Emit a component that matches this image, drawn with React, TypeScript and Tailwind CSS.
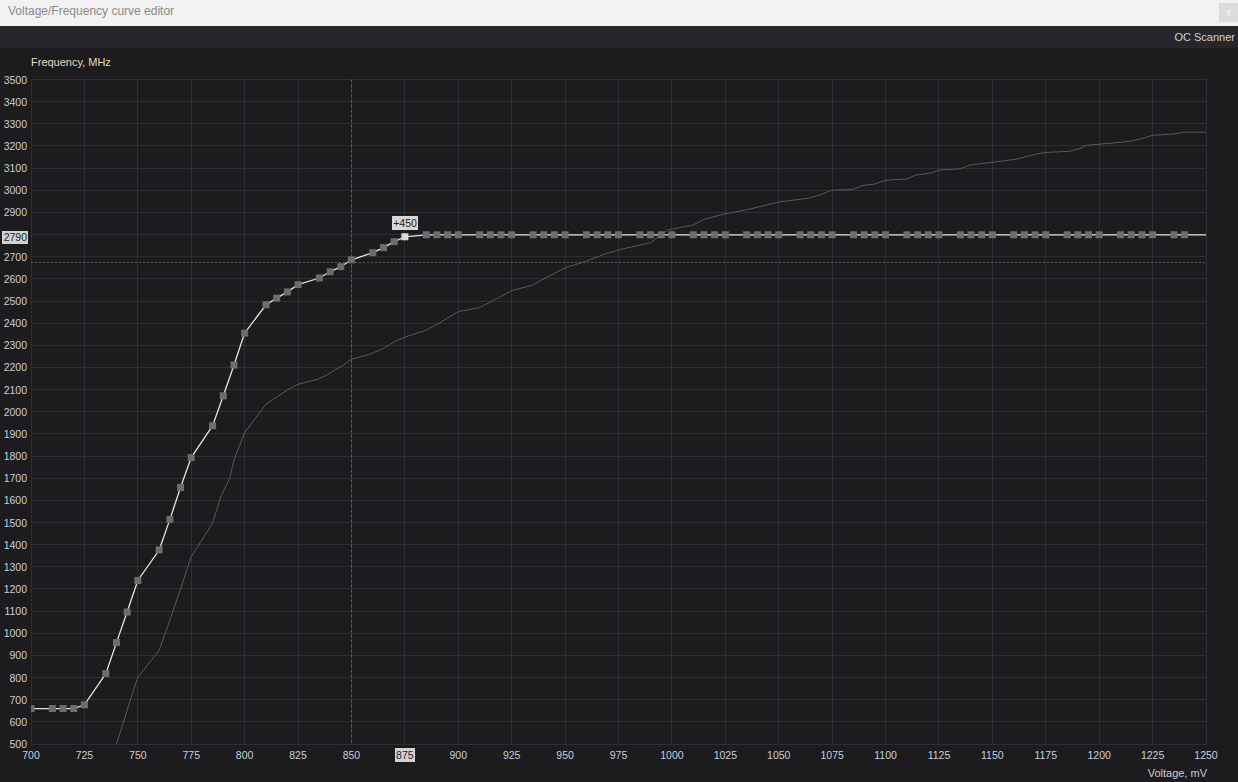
import React from "react";

// plot geometry (svg coords, chart area starts at page y=48)
const X0 = 31;
const X1 = 1206;
const TOP = 31.5;
const PXF = 0.2215;

const vx = (mv: number) => X0 + ((mv - 700) * (X1 - X0)) / 550;
const fy = (f: number) => TOP + (3500 - f) * PXF;
const BOTTOM = fy(500);

// stock curve (no handles)
const stock: [number, number][] = [
  [740, 500], [748, 744], [750, 800], [760, 924], [765, 1060], [770, 1200],
  [775, 1346], [780, 1421], [785, 1498], [789, 1620], [793, 1700], [795, 1782],
  [800, 1905], [810, 2034], [820, 2098], [825, 2124], [834.5, 2148], [838.4, 2166],
  [846.2, 2211], [850, 2237], [859, 2261], [865, 2286], [870, 2316], [875.5, 2339],
  [882, 2359], [884.4, 2366], [891.4, 2402], [900, 2452], [910, 2470], [914, 2490],
  [925, 2547], [935, 2572], [939, 2595], [950, 2650], [960, 2680], [968, 2710],
  [976, 2733], [990, 2763], [998, 2820], [1010, 2843], [1015, 2869], [1024.6, 2893],
  [1036, 2914], [1050, 2947], [1064, 2964], [1069.4, 2979], [1074.6, 3000],
  [1085, 3004], [1089, 3021], [1095, 3028], [1100, 3045], [1110, 3051],
  [1114, 3069], [1121, 3077], [1125, 3091], [1135, 3097], [1140, 3115],
  [1148, 3124], [1155, 3132], [1162, 3142], [1169, 3160], [1175, 3171],
  [1186, 3176], [1191, 3188], [1194, 3203], [1206, 3213], [1215, 3222],
  [1221, 3236], [1225, 3248], [1235, 3254], [1240, 3262], [1250, 3262],
];

// edited curve with handles
const rise: [number, number][] = [
  [700, 660], [710, 660], [715, 660], [720, 660], [725, 677], [735, 818],
  [740, 958], [745, 1096], [750, 1238], [760, 1376], [765, 1514], [770, 1658],
  [775, 1793], [785, 1937], [790, 2072], [795, 2211], [800, 2355], [810, 2483],
  [815, 2513], [820, 2541], [825, 2574], [835, 2604], [840, 2632], [845, 2655],
  [850, 2686], [860, 2718], [865, 2741], [870, 2768], [875, 2790],
];
const flat: [number, number][] = [];
for (let v = 885; v <= 1240; v += 5) {
  if ((v - 880) % 25 !== 0) flat.push([v, 2799]);
}
const edited = [...rise, ...flat];
const editedLine = [...edited, [1250, 2799] as [number, number]];

const pts = (list: [number, number][]) =>
  list.map(([v, f]) => `${vx(v).toFixed(1)},${fy(f).toFixed(1)}`).join(" ");

const freqTicks: number[] = [];
for (let f = 3500; f >= 500; f -= 100) freqTicks.push(f);
const voltTicks: number[] = [];
for (let v = 700; v <= 1250; v += 25) voltTicks.push(v);

const gx = (v: number) => Math.floor(vx(v)) + 0.5;
const gy = (f: number) => Math.floor(fy(f)) + 0.5;

function CurveChart() {
  return (
    <svg
      width="1238"
      height="734"
      viewBox="0 0 1238 734"
      className="block font-['Liberation_Sans',Arial,sans-serif]"
    >
      <defs>
        <clipPath id="plot">
          <rect x={X0} y={TOP - 6} width={X1 - X0 + 1} height={BOTTOM - TOP + 6} />
        </clipPath>
      </defs>

      <text x={31} y={18} fontSize="11" fill="#e2d9c7">
        Frequency, MHz
      </text>

      {/* grid */}
      {freqTicks.map((f) => (
        <line key={`h${f}`} x1={X0} x2={X1 + 1} y1={gy(f)} y2={gy(f)} stroke="#2f2f33" strokeWidth="1" />
      ))}
      {voltTicks.map((v) => (
        <line key={`v${v}`} x1={gx(v)} x2={gx(v)} y1={gy(3500)} y2={gy(500)} stroke="#2f2f33" strokeWidth="1" />
      ))}

      {/* cursor guides */}
      <line x1={X0} x2={X1} y1={214.5} y2={214.5} stroke="#5c5c5c" strokeDasharray="2 2" />
      <line x1={gx(850)} x2={gx(850)} y1={gy(3500)} y2={gy(500)} stroke="#5c5c5c" strokeDasharray="3 2" />

      <g clipPath="url(#plot)">
        <polyline points={pts(stock)} fill="none" stroke="#59595c" strokeWidth="1" />
        <polyline points={pts(editedLine)} fill="none" stroke="#e4e4e4" strokeWidth="1.3" />
        {edited.map(([v, f]) => (
          <rect
            key={`m${v}`}
            x={vx(v) - 3.5}
            y={fy(f) - 3.5}
            width="7"
            height="7"
            fill={v === 875 ? "#d9d9d9" : "#6d6d6d"}
          />
        ))}
      </g>

      {/* y axis */}
      {freqTicks
        .filter((f) => f !== 2800)
        .map((f) => (
          <text key={`yl${f}`} x={27} y={fy(f) + 4} fontSize="10.5" textAnchor="end" fill="#c9ced5">
            {f}
          </text>
        ))}
      <rect x={2} y={183} width={26} height={13} fill="#d2d2d2" />
      <text x={27} y={193} fontSize="10.5" textAnchor="end" fill="#1e1e1e">
        2790
      </text>

      {/* x axis */}
      {voltTicks.map((v) =>
        v === 875 ? (
          <g key={`xl${v}`}>
            <rect x={395} y={700} width={20} height={14} fill="#d2d2d2" />
            <text x={vx(v)} y={711} fontSize="10.5" textAnchor="middle" fill="#1e1e1e">
              {v}
            </text>
          </g>
        ) : (
          <text key={`xl${v}`} x={vx(v)} y={711} fontSize="10.5" textAnchor="middle" fill="#c9ced5">
            {v}
          </text>
        )
      )}
      <text x={1207} y={729} fontSize="11" textAnchor="end" fill="#c9ced5">
        Voltage, mV
      </text>

      {/* offset tooltip */}
      <rect x={392} y={168} width={26} height={14} fill="#d6d6d6" />
      <text x={405} y={179} fontSize="10.5" textAnchor="middle" fill="#222">
        +450
      </text>
    </svg>
  );
}

export default function App() {
  return (
    <div className="flex h-screen w-full flex-col overflow-hidden bg-[#1c1c1f] font-['Liberation_Sans',Arial,sans-serif]">
      {/* window title */}
      <div className="flex h-[26px] shrink-0 items-start justify-between bg-[#f2f2f2]">
        <span className="pl-2 pt-[4px] text-[12px] leading-[14px] text-[#8a8a8a]">
          Voltage/Frequency curve editor
        </span>
        <button className="mt-[3px] flex h-[19px] w-[19px] items-center justify-center bg-[#dcdcdc] text-[10px] leading-none text-[#f7f7f7]">
          x
        </button>
      </div>

      {/* toolbar */}
      <div className="flex h-[22px] shrink-0 items-center justify-end bg-[#27272b] pr-[3px]">
        <span className="text-[11px] text-[#cdd1d6]">OC Scanner</span>
      </div>

      {/* chart */}
      <div className="flex-1">
        <CurveChart />
      </div>
    </div>
  );
}
